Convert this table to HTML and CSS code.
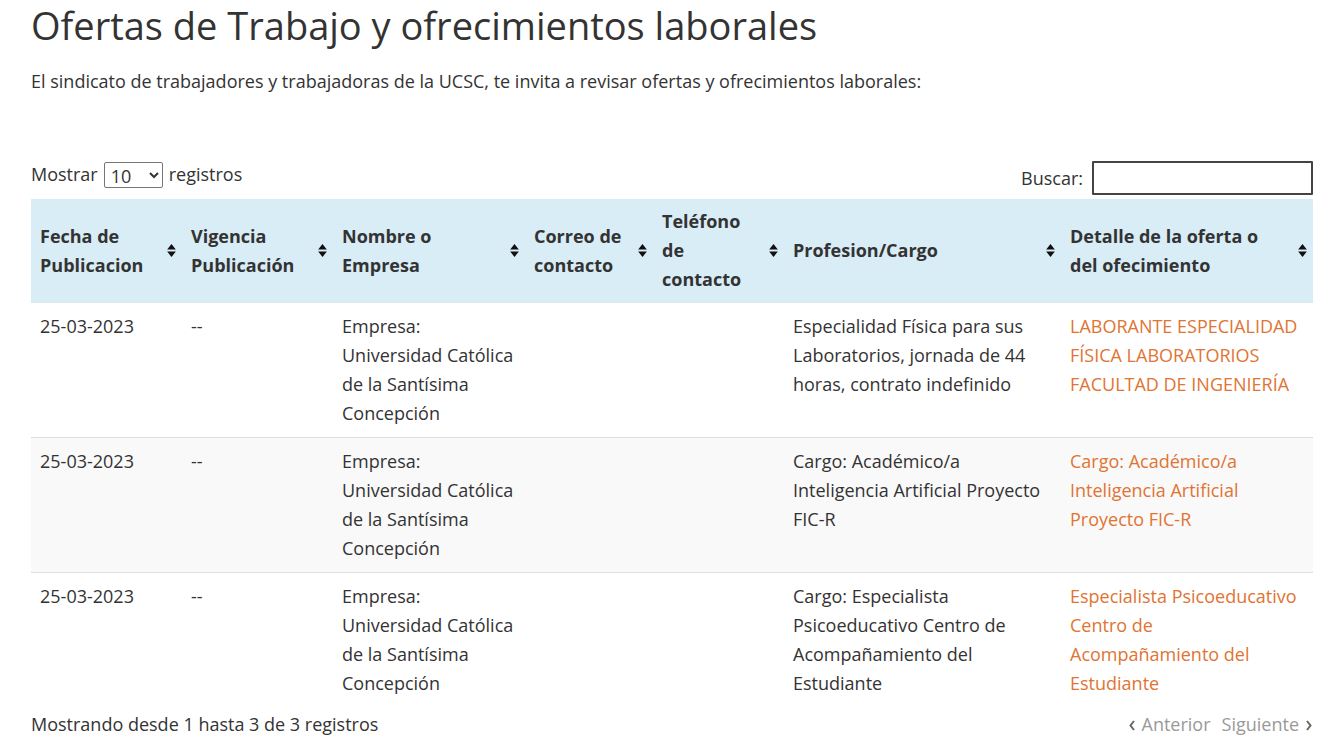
FILE: index.html
```html
<!DOCTYPE html>
<html lang="es">
<head>
<meta charset="utf-8">
<title>Ofertas de Trabajo</title>
<link rel="stylesheet" href="styles.css">
</head>
<body>
<div class="page">
  <h1 class="title">Ofertas de Trabajo y ofrecimientos laborales</h1>
  <p class="intro">El sindicato de trabajadores y trabajadoras de la UCSC, te invita a revisar ofertas y ofrecimientos laborales:</p>

  <div class="controls">
    <label class="length">Mostrar
      <select class="length-select"><option>10</option></select>
      registros</label>
    <label class="search">Buscar: <input class="search-input" type="search"></label>
  </div>

  <table class="data">
    <colgroup>
      <col class="c1"><col class="c2"><col class="c3"><col class="c4"><col class="c5"><col class="c6"><col class="c7">
    </colgroup>
    <thead>
      <tr>
        <th><div class="th-in"><span>Fecha de Publicacion</span><svg class="sort" viewBox="0 0 8 12"><path d="M4 0L8 5H0z M4 12L8 7H0z"/></svg></div></th>
        <th><div class="th-in"><span>Vigencia Publicación</span><svg class="sort" viewBox="0 0 8 12"><path d="M4 0L8 5H0z M4 12L8 7H0z"/></svg></div></th>
        <th><div class="th-in"><span>Nombre o Empresa</span><svg class="sort" viewBox="0 0 8 12"><path d="M4 0L8 5H0z M4 12L8 7H0z"/></svg></div></th>
        <th><div class="th-in"><span>Correo de contacto</span><svg class="sort" viewBox="0 0 8 12"><path d="M4 0L8 5H0z M4 12L8 7H0z"/></svg></div></th>
        <th><div class="th-in"><span>Teléfono de contacto</span><svg class="sort" viewBox="0 0 8 12"><path d="M4 0L8 5H0z M4 12L8 7H0z"/></svg></div></th>
        <th><div class="th-in"><span>Profesion/Cargo</span><svg class="sort" viewBox="0 0 8 12"><path d="M4 0L8 5H0z M4 12L8 7H0z"/></svg></div></th>
        <th><div class="th-in"><span>Detalle de la oferta o del ofecimiento</span><svg class="sort" viewBox="0 0 8 12"><path d="M4 0L8 5H0z M4 12L8 7H0z"/></svg></div></th>
      </tr>
    </thead>
    <tbody>
      <tr>
        <td>25-03-2023</td>
        <td>--</td>
        <td>Empresa:<br>Universidad Católica de la Santísima Concepción</td>
        <td></td>
        <td></td>
        <td>Especialidad Física para sus Laboratorios, jornada de 44 horas, contrato indefinido</td>
        <td><a class="link" href="#">LABORANTE ESPECIALIDAD FÍSICA LABORATORIOS FACULTAD DE INGENIERÍA</a></td>
      </tr>
      <tr class="odd">
        <td>25-03-2023</td>
        <td>--</td>
        <td>Empresa:<br>Universidad Católica de la Santísima Concepción</td>
        <td></td>
        <td></td>
        <td>Cargo: Académico/a Inteligencia Artificial Proyecto FIC-R</td>
        <td><a class="link" href="#">Cargo: Académico/a Inteligencia Artificial Proyecto FIC-R</a></td>
      </tr>
      <tr>
        <td>25-03-2023</td>
        <td>--</td>
        <td>Empresa:<br>Universidad Católica de la Santísima Concepción</td>
        <td></td>
        <td></td>
        <td>Cargo: Especialista Psicoeducativo Centro de Acompañamiento del Estudiante</td>
        <td><a class="link" href="#">Especialista Psicoeducativo Centro de Acompañamiento del Estudiante</a></td>
      </tr>
    </tbody>
  </table>

  <div class="footer">
    <div class="info">Mostrando desde 1 hasta 3 de 3 registros</div>
    <div class="paging">
      <span class="pg"><svg class="chev" viewBox="0 0 8 12"><path d="M6 2L2.5 6.5 6 11" /></svg>Anterior</span>
      <span class="pg">Siguiente<svg class="chev" viewBox="0 0 8 12"><path d="M2 2l3.5 4.5L2 11" /></svg></span>
    </div>
  </div>
</div>
</body>
</html>
```

FILE: styles.css
```css
html, body {
  margin: 0;
  padding: 0;
  background: #fff;
}
body {
  font-family: "Open Sans", "Liberation Sans", sans-serif;
  font-size: 18px;
  line-height: 29px;
  color: #333;
}
.page {
  padding: 0 29px 0 31px;
}
.title {
  font-size: 38px;
  font-weight: 400;
  line-height: 44px;
  margin: 3px 0 0;
  color: #333;
}
.intro {
  margin: 20px 0 0;
}
.controls {
  margin-top: 63px;
  display: flex;
  justify-content: space-between;
  align-items: flex-start;
}
.length {
  display: flex;
  align-items: center;
  gap: 6px;
  margin-top: 1px;
}
.length-select {
  width: 59px;
  height: 26px;
  font-family: "Open Sans", "Liberation Sans", sans-serif;
  font-size: 18px;
  color: #333;
  border: 1px solid #767676;
  border-radius: 2px;
  background: #fff;
  padding: 0 2px;
}
.search {
  display: flex;
  align-items: center;
  gap: 9px;
  padding-top: 2px;
}
.search-input {
  width: 221px;
  height: 34px;
  box-sizing: border-box;
  border: 2px solid #444;
  border-radius: 1px;
  margin: 0;
}
.data {
  margin-top: 4px;
  width: 100%;
  border-collapse: collapse;
  table-layout: fixed;
}
.c1 { width: 151px; }
.c2 { width: 151px; }
.c3 { width: 192px; }
.c4 { width: 128px; }
.c5 { width: 131px; }
.c6 { width: 277px; }
.c7 { width: 252px; }
thead tr {
  background: #d9edf7;
}
th {
  text-align: left;
  font-weight: 700;
  padding: 8px 6px 8px 9px;
  vertical-align: middle;
  border-bottom: 1px solid #dde6eb;
}
.th-in {
  display: flex;
  align-items: center;
  justify-content: space-between;
  gap: 14px;
}
.sort {
  width: 9px;
  height: 13px;
  flex: none;
  fill: #111;
}
td {
  padding: 9px 9px 9px 9px;
  vertical-align: top;
  border-top: 1px solid #ddd;
}
tbody tr:first-child td {
  border-top: 1px solid #e3e3e3;
}
tr.odd {
  background: #f9f9f9;
}
.link {
  color: #e07433;
  text-decoration: none;
}
.footer {
  display: flex;
  justify-content: space-between;
  align-items: center;
  margin-top: 3px;
}
.paging {
  display: flex;
  gap: 11px;
  color: #999;
}
.pg {
  display: flex;
  align-items: center;
  gap: 6px;
}
.chev {
  width: 8px;
  height: 12px;
  fill: none;
  stroke: #666;
  stroke-width: 2;
}
```
